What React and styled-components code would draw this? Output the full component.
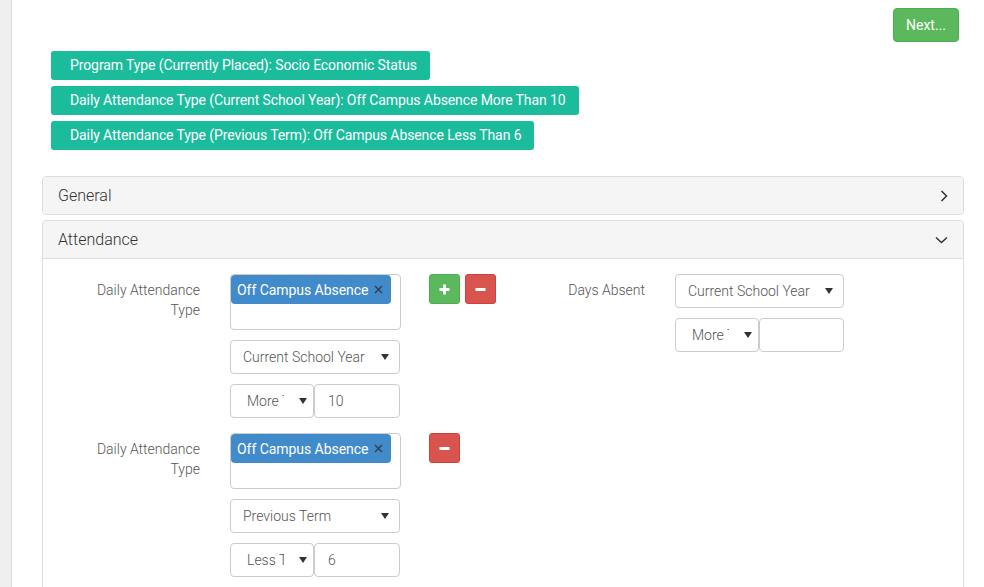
import styled, { createGlobalStyle } from "styled-components";

const GlobalStyle = createGlobalStyle`
  body {
    margin: 0;
    font-family: Roboto, "Liberation Sans", sans-serif;
    font-weight: 300;
    font-size: 14px;
    color: #555;
    background: #fff;
  }
`;

const tags = [
  "Program Type (Currently Placed): Socio Economic Status",
  "Daily Attendance Type (Current School Year): Off Campus Absence More Than 10",
  "Daily Attendance Type (Previous Term): Off Campus Absence Less Than 6",
];

const criteria = [
  { period: "Current School Year", compare: "More Than", value: "10", canAdd: true },
  { period: "Previous Term", compare: "Less Than", value: "6", canAdd: false },
];

function ChevronRight() {
  return (
    <svg width="8" height="12" viewBox="0 0 8 12">
      <polyline points="1.5,1 6.5,6 1.5,11" fill="none" stroke="#333" strokeWidth="1.5" />
    </svg>
  );
}

function ChevronDown() {
  return (
    <svg width="13" height="8" viewBox="0 0 13 8">
      <polyline points="1,1.5 6.5,6.5 12,1.5" fill="none" stroke="#333" strokeWidth="1.5" />
    </svg>
  );
}

function Select({ value, small }) {
  return (
    <SelectBox $small={small}>
      <SelectText $small={small}>{value}</SelectText>
      <Caret />
    </SelectBox>
  );
}

export default function App() {
  return (
    <Shell>
      <GlobalStyle />
      <Sidebar />
      <Main>
        <Toolbar>
          <NextButton>Next...</NextButton>
        </Toolbar>

        <TagList>
          {tags.map((tag) => (
            <Tag key={tag}>{tag}</Tag>
          ))}
        </TagList>

        <PanelGroup>
          <Panel>
            <PanelHeader>
              <PanelTitle>General</PanelTitle>
              <ChevronRight />
            </PanelHeader>
          </Panel>

          <Panel>
            <PanelHeader $open>
              <PanelTitle>Attendance</PanelTitle>
              <ChevronDown />
            </PanelHeader>
            <PanelBody>
              <CriteriaColumn>
                {criteria.map((c) => (
                  <CriteriaGroup key={c.period}>
                    <FieldLabel $inset>Daily Attendance Type</FieldLabel>
                    <FieldStack>
                      <MultiBox>
                        <Chip>
                          Off Campus Absence
                          <svg width="9" height="9" viewBox="0 0 9 9">
                            <path d="M1 1L8 8M8 1L1 8" stroke="#2f3d4c" strokeWidth="1.4" />
                          </svg>
                        </Chip>
                      </MultiBox>
                      <Select value={c.period} />
                      <SplitRow>
                        <Select value={c.compare} small />
                        <NumberInput>{c.value}</NumberInput>
                      </SplitRow>
                    </FieldStack>
                    <ButtonRow>
                      {c.canAdd && (
                        <IconButton $variant="add">
                          <svg width="11" height="11" viewBox="0 0 11 11">
                            <rect x="4" y="0.5" width="3" height="10" fill="#fff" />
                            <rect x="0.5" y="4" width="10" height="3" fill="#fff" />
                          </svg>
                        </IconButton>
                      )}
                      <IconButton $variant="remove">
                        <svg width="11" height="11" viewBox="0 0 11 11">
                          <rect x="0.5" y="4" width="10" height="3" fill="#fff" />
                        </svg>
                      </IconButton>
                    </ButtonRow>
                  </CriteriaGroup>
                ))}
              </CriteriaColumn>

              <SideGroup>
                <FieldLabel>Days Absent</FieldLabel>
                <FieldStack>
                  <Select value="Current School Year" />
                  <SplitRow>
                    <Select value="More Than" small />
                    <NumberInput />
                  </SplitRow>
                </FieldStack>
              </SideGroup>
            </PanelBody>
          </Panel>
        </PanelGroup>
      </Main>
    </Shell>
  );
}

const Shell = styled.div`
  display: flex;
  min-height: 100vh;
  overflow: hidden;
`;

const Sidebar = styled.aside`
  width: 11px;
  flex: none;
  background: #efefef;
  border-right: 1px solid #dcdcdc;
`;

const Main = styled.main`
  flex: 1;
  padding: 8px 20px 0 30px;
`;

const Toolbar = styled.div`
  display: flex;
  justify-content: flex-end;
  padding-right: 5px;
`;

const NextButton = styled.button`
  height: 34px;
  padding: 0 12px;
  border: 1px solid #4cae4c;
  border-radius: 4px;
  background: #5cb85c;
  color: #fff;
  font: inherit;
  font-size: 14px;
  font-weight: 400;
`;

const TagList = styled.div`
  display: flex;
  flex-direction: column;
  align-items: flex-start;
  gap: 6px;
  margin-top: 9px;
  padding-left: 9px;
`;

const Tag = styled.div`
  height: 29px;
  line-height: 29px;
  padding: 0 13px 0 19px;
  border-radius: 3px;
  background: #1abc9c;
  color: #fff;
  font-size: 14px;
  font-weight: 400;
  letter-spacing: -0.1px;
  white-space: nowrap;
`;

const PanelGroup = styled.div`
  display: flex;
  flex-direction: column;
  gap: 5px;
  margin-top: 26px;
`;

const Panel = styled.section`
  border: 1px solid #ddd;
  border-radius: 4px;
  background: #fff;
`;

const PanelHeader = styled.div`
  display: flex;
  align-items: center;
  justify-content: space-between;
  padding: 10px 15px;
  background: #f5f5f5;
  border-radius: ${(p) => (p.$open ? "3px 3px 0 0" : "3px")};
  border-bottom: ${(p) => (p.$open ? "1px solid #ddd" : "none")};
`;

const PanelTitle = styled.h4`
  margin: 0;
  font-size: 16px;
  font-weight: 300;
  line-height: 17px;
  color: #333;
`;

const PanelBody = styled.div`
  display: flex;
  gap: 47px;
  padding: 15px;
  min-height: 400px;
`;

const CriteriaColumn = styled.div`
  display: flex;
  flex-direction: column;
  gap: 15px;
`;

const CriteriaGroup = styled.div`
  display: grid;
  grid-template-columns: 142px 170px 68px;
  column-gap: 30px;
  align-items: start;

  & > :last-child {
    margin-left: -1px;
  }
`;

const SideGroup = styled.div`
  display: grid;
  grid-template-columns: 100px 169px;
  column-gap: 30px;
  align-items: start;
  align-self: flex-start;
`;

const FieldLabel = styled.label`
  padding: 6px 0 0 ${(p) => (p.$inset ? "30px" : "0")};
  text-align: right;
  line-height: 20px;
  color: #555;
  white-space: ${(p) => (p.$inset ? "normal" : "nowrap")};
`;

const FieldStack = styled.div`
  display: flex;
  flex-direction: column;
  gap: 10px;
`;

const MultiBox = styled.div`
  height: 56px;
  box-sizing: border-box;
  border: 1px solid #ccc;
  border-radius: 4px;
  width: 171px;
`;

const Chip = styled.span`
  display: inline-flex;
  align-items: center;
  height: 29px;
  padding: 0 8px 0 6px;
  gap: 6px;
  border-radius: 4px;
  background: #428bca;
  color: #fff;
  font-size: 14px;
  font-weight: 400;
  letter-spacing: -0.05px;
  white-space: nowrap;
`;

const SelectBox = styled.div`
  display: flex;
  align-items: center;
  justify-content: space-between;
  height: 34px;
  box-sizing: border-box;
  width: ${(p) => (p.$small ? "84px" : "100%")};
  padding: ${(p) => (p.$small ? "0 6px 0 16px" : "0 10px 0 12px")};
  border: 1px solid #ccc;
  border-radius: 4px;
  color: #555;
`;

const SelectText = styled.span`
  white-space: nowrap;
  overflow: hidden;
  width: ${(p) => (p.$small ? "37px" : "auto")};
`;

const Caret = styled.span`
  width: 0;
  height: 0;
  border-left: 4px solid transparent;
  border-right: 4px solid transparent;
  border-top: 6px solid #333;
`;

const SplitRow = styled.div`
  display: flex;
`;

const NumberInput = styled.div`
  flex: 1;
  height: 34px;
  box-sizing: border-box;
  padding: 0 13px;
  line-height: 32px;
  border: 1px solid #ccc;
  border-radius: 4px;
  color: #555;
`;

const ButtonRow = styled.div`
  display: flex;
  gap: 5px;
`;

const IconButton = styled.button`
  display: flex;
  align-items: center;
  justify-content: center;
  width: 31px;
  height: 30px;
  padding: 0;
  border-radius: 3px;
  border: 1px solid ${(p) => (p.$variant === "add" ? "#4cae4c" : "#d43f3a")};
  background: ${(p) => (p.$variant === "add" ? "#5cb85c" : "#d9534f")};
`;
